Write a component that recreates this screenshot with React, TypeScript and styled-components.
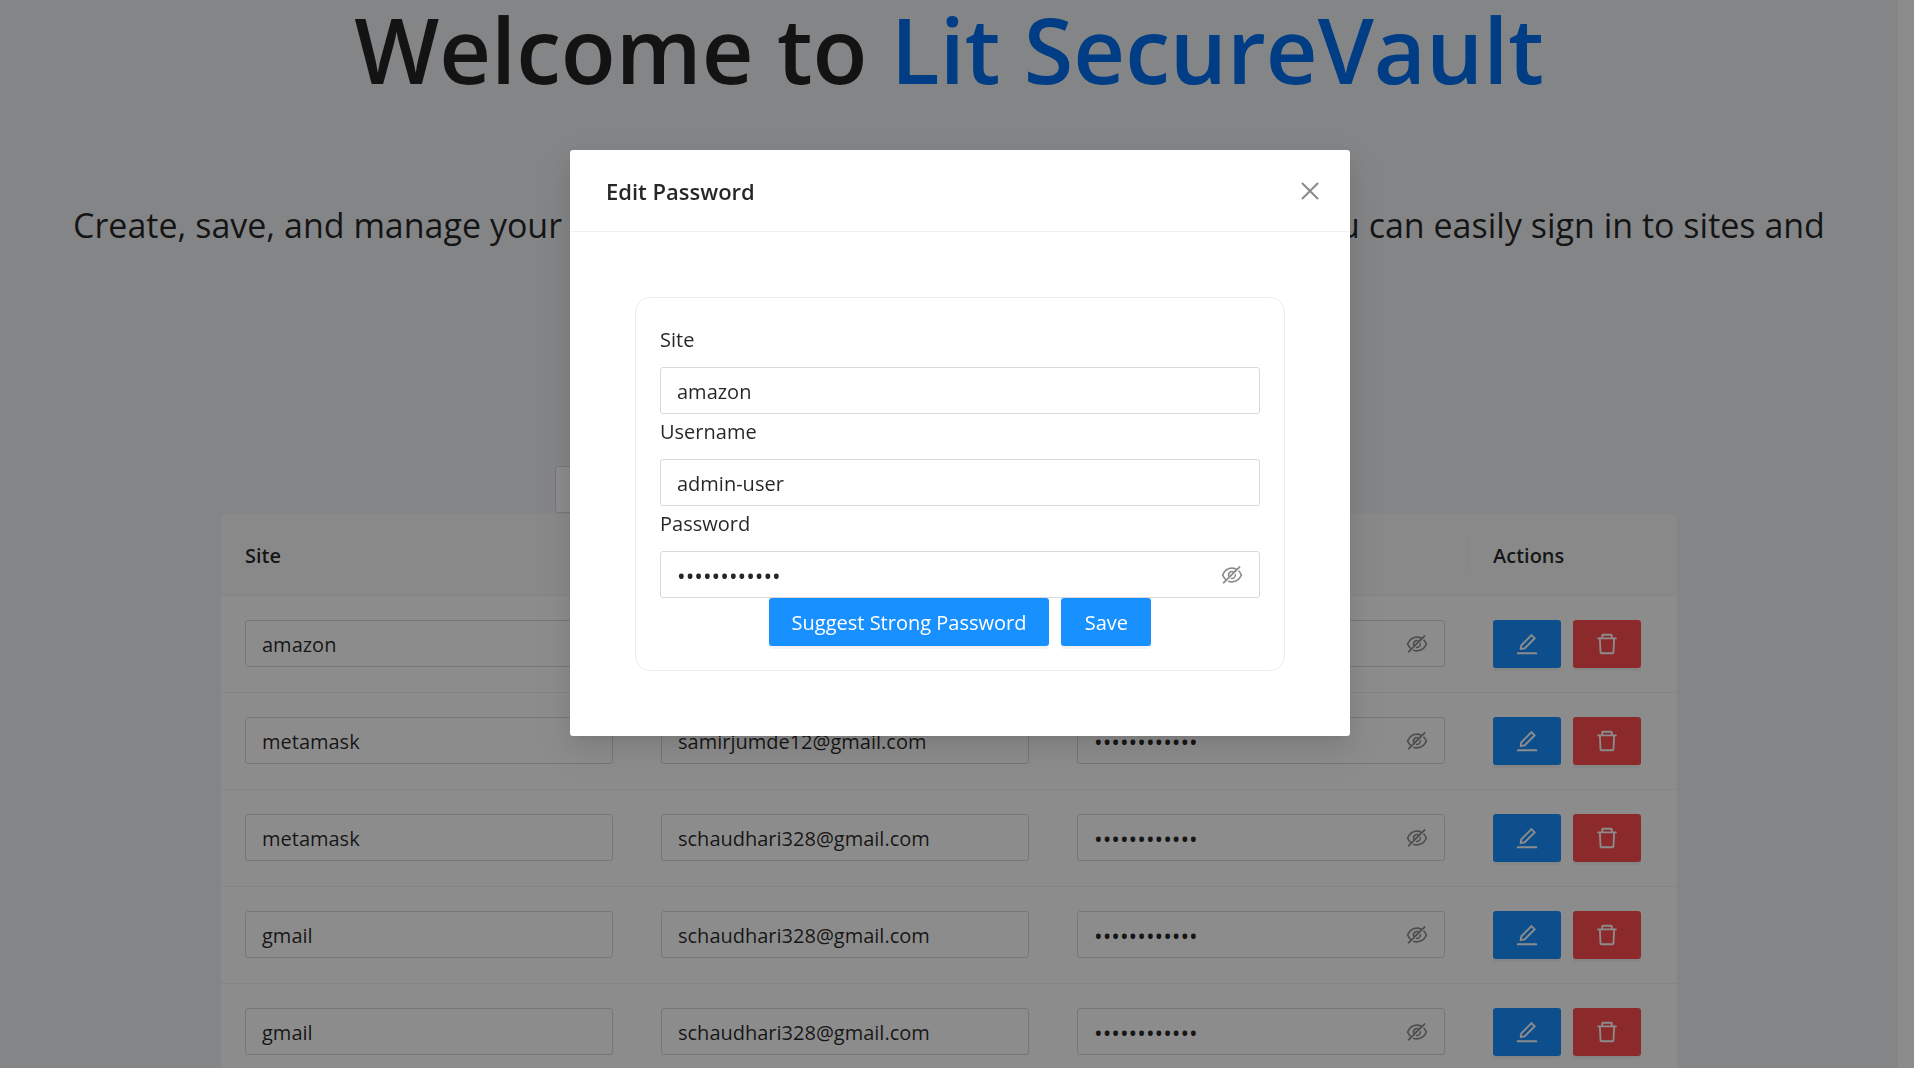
import React, { useId, useState } from "react";
import styled, { createGlobalStyle } from "styled-components";
import {
  AiOutlineClose,
  AiOutlineDelete,
  AiOutlineEdit,
  AiOutlineEye,
  AiOutlineEyeInvisible,
} from "react-icons/ai";

const GlobalStyle = createGlobalStyle`
  *, *::before, *::after { box-sizing: border-box; }
  html, body { margin: 0; background: #fff; }
  body, input, button {
    font-family: "Open Sans", "Noto Sans", sans-serif;
    font-size: 20px;
    line-height: 33px;
    color: rgba(0, 0, 0, 0.85);
  }
`;

const Viewport = styled.div`
  height: 100vh;
  overflow: hidden;
  padding-right: 16px;
`;

const Page = styled.main`
  display: flex;
  flex-direction: column;
  align-items: center;
  min-height: 100%;
  background: #f0f2f5;
`;

const Title = styled.h1`
  margin: 0;
  font-size: 90px;
  line-height: 98px;
  font-weight: 600;
  white-space: nowrap;
`;

const Brand = styled.span`
  color: #006ff2;
`;

const Lead = styled.p`
  margin: 99px 0 0;
  padding: 0 48px;
  font-size: 34px;
  line-height: 56px;
  text-align: center;
`;

const SearchRow = styled.div`
  width: 100%;
  max-width: 788px;
  margin-top: 157px;
`;

const TextInput = styled.input`
  display: block;
  width: 100%;
  height: 47px;
  padding: 8px 16px 6px;
  border: 1px solid #d9d9d9;
  border-radius: 3px;
  background: #fff;
  outline: none;
`;

const SecretBox = styled.div`
  display: flex;
  align-items: center;
  height: 47px;
  padding: 0 15px 0 16px;
  border: 1px solid #d9d9d9;
  border-radius: 3px;
  background: #fff;
`;

const SecretInput = styled.input`
  flex: 1;
  min-width: 0;
  padding: 4px 0 0;
  border: 0;
  background: transparent;
  outline: none;

  &[type="password"] { font-size: 23px; }
`;

const IconButton = styled.button<{ $size: number }>`
  display: flex;
  padding: 0;
  border: 0;
  background: none;
  color: rgba(0, 0, 0, 0.45);
  font-size: ${(p) => p.$size}px;
  line-height: 1;
  cursor: pointer;
`;

const TableWrap = styled.div`
  width: 100%;
  padding: 0 221px;
  margin-top: 1px;
`;

const Table = styled.table`
  width: 100%;
  table-layout: fixed;
  border-collapse: separate;
  border-spacing: 0;
  background: #fff;
  border-radius: 3px 3px 0 0;
`;

const Th = styled.th<{ $last?: boolean }>`
  position: relative;
  width: ${(p) => (p.$last ? "14.2857%" : "28.5714%")};
  height: 82px;
  padding: 2px 24px 0;
  text-align: left;
  font-weight: 600;
  background: #fafafa;
  border-bottom: 1px solid #f0f0f0;

  &:first-child { border-top-left-radius: 3px; }
  &:last-child { border-top-right-radius: 3px; }

  &:not(:last-child)::after {
    content: "";
    position: absolute;
    top: 24px;
    right: 0;
    width: 1px;
    height: 33px;
    background: #f0f0f0;
  }
`;

const Td = styled.td`
  height: 97px;
  padding: 24px;
  vertical-align: top;
  border-bottom: 1px solid #f0f0f0;
`;

const Buttons = styled.div<{ $center?: boolean }>`
  display: flex;
  gap: 12px;
  justify-content: ${(p) => (p.$center ? "center" : "flex-start")};
`;

const Button = styled.button<{ $danger?: boolean; $icon?: boolean }>`
  display: flex;
  align-items: center;
  justify-content: center;
  flex: none;
  height: 48px;
  min-width: ${(p) => (p.$icon ? 68 : 90)}px;
  padding: 0 ${(p) => (p.$icon ? 0 : 23)}px;
  border: 0;
  border-radius: 3px;
  color: #fff;
  background: ${(p) => (p.$danger ? "#ff4d4f" : "#1890ff")};
  box-shadow: 0 3px 0 rgba(0, 0, 0, 0.045);
  cursor: pointer;

  svg { font-size: 26px; }
`;

const Overlay = styled.div`
  position: fixed;
  inset: 0;
  display: flex;
  justify-content: center;
  align-items: flex-start;
  padding: 150px 0 36px 6px;
  background: rgba(0, 0, 0, 0.45);
`;

const Dialog = styled.section`
  width: 780px;
  max-width: 100%;
  background: #fff;
  border-radius: 3px;
  box-shadow:
    0 4px 9px -6px rgba(0, 0, 0, 0.12),
    0 9px 24px 0 rgba(0, 0, 0, 0.08),
    0 14px 42px 12px rgba(0, 0, 0, 0.05);
`;

const DialogHead = styled.header`
  display: flex;
  align-items: center;
  justify-content: space-between;
  height: 82px;
  padding: 0 27px 0 36px;
  border-bottom: 1px solid #f0f0f0;
`;

const DialogTitle = styled.h2`
  margin: 0;
  padding-top: 2px;
  font-size: 22px;
  line-height: 33px;
  font-weight: 600;
`;

const DialogBody = styled.div`
  padding: 65px;
`;

const Form = styled.form`
  padding: 24px;
  border: 1px solid #ececec;
  border-radius: 15px;
`;

const Label = styled.label`
  display: block;
  margin-bottom: 10px;
  line-height: 35px;
`;

function PasswordInput({ id, label }: { id?: string; label?: string }) {
  const [shown, setShown] = useState(false);
  return (
    <SecretBox>
      <SecretInput
        id={id}
        aria-label={label}
        type={shown ? "text" : "password"}
        defaultValue="vault-secret"
      />
      <IconButton
        type="button"
        $size={24}
        aria-label={shown ? "Hide password" : "Show password"}
        onClick={() => setShown(!shown)}
      >
        {shown ? <AiOutlineEye /> : <AiOutlineEyeInvisible />}
      </IconButton>
    </SecretBox>
  );
}

const entries = [
  { site: "amazon", user: "admin-user" },
  { site: "metamask", user: "samirjumde12@gmail.com" },
  { site: "metamask", user: "schaudhari328@gmail.com" },
  { site: "gmail", user: "schaudhari328@gmail.com" },
  { site: "gmail", user: "schaudhari328@gmail.com" },
];

function VaultTable() {
  return (
    <Table>
      <thead>
        <tr>
          <Th>Site</Th>
          <Th>Username</Th>
          <Th>Password</Th>
          <Th $last>Actions</Th>
        </tr>
      </thead>
      <tbody>
        {entries.map((entry, i) => (
          <tr key={i}>
            <Td>
              <TextInput aria-label="Site" defaultValue={entry.site} />
            </Td>
            <Td>
              <TextInput aria-label="Username" defaultValue={entry.user} />
            </Td>
            <Td>
              <PasswordInput label="Password" />
            </Td>
            <Td>
              <Buttons>
                <Button $icon type="button" aria-label="Edit">
                  <AiOutlineEdit />
                </Button>
                <Button $icon $danger type="button" aria-label="Delete">
                  <AiOutlineDelete />
                </Button>
              </Buttons>
            </Td>
          </tr>
        ))}
      </tbody>
    </Table>
  );
}

function EditDialog({ onClose }: { onClose: () => void }) {
  const id = useId();
  return (
    <Overlay>
      <Dialog role="dialog" aria-modal="true" aria-labelledby={`${id}-title`}>
        <DialogHead>
          <DialogTitle id={`${id}-title`}>Edit Password</DialogTitle>
          <IconButton type="button" $size={26} aria-label="Close" onClick={onClose}>
            <AiOutlineClose />
          </IconButton>
        </DialogHead>
        <DialogBody>
          <Form onSubmit={(e) => e.preventDefault()}>
            <Label htmlFor={`${id}-site`}>Site</Label>
            <TextInput id={`${id}-site`} defaultValue="amazon" />
            <Label htmlFor={`${id}-user`}>Username</Label>
            <TextInput id={`${id}-user`} defaultValue="admin-user" />
            <Label htmlFor={`${id}-pass`}>Password</Label>
            <PasswordInput id={`${id}-pass`} />
            <Buttons $center>
              <Button type="button">Suggest Strong Password</Button>
              <Button type="submit">Save</Button>
            </Buttons>
          </Form>
        </DialogBody>
      </Dialog>
    </Overlay>
  );
}

export default function App() {
  const [editing, setEditing] = useState(true);
  return (
    <>
      <GlobalStyle />
      <Viewport>
        <Page>
          <Title>
            Welcome to <Brand>Lit SecureVault</Brand>
          </Title>
          <Lead>
            Create, save, and manage your passwords and other login credentials
            so that you can easily sign in to sites and apps.
          </Lead>
          <SearchRow>
            <TextInput type="search" aria-label="Search by site" />
          </SearchRow>
          <TableWrap>
            <VaultTable />
          </TableWrap>
        </Page>
      </Viewport>
      {editing && <EditDialog onClose={() => setEditing(false)} />}
    </>
  );
}
